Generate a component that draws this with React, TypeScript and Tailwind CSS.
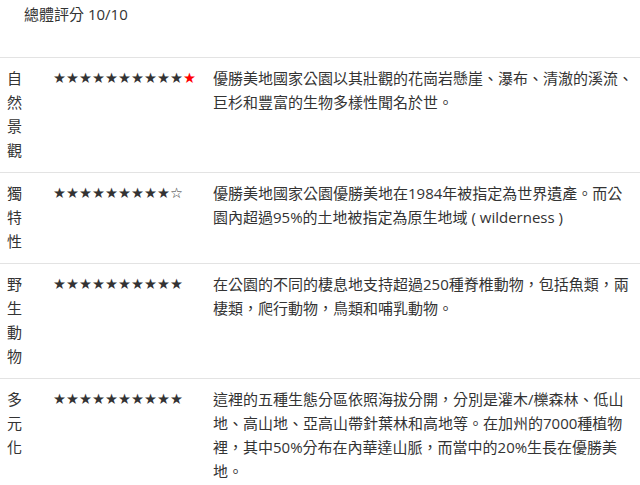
import React from "react";

const rows = [
  {
    label: "自然景觀",
    stars: <><span>★★★★★★★★★★</span><span className="text-[#ff0000]">★</span></>,
    text: "優勝美地國家公園以其壯觀的花崗岩懸崖、瀑布、清澈的溪流、巨杉和豐富的生物多樣性聞名於世。",
  },
  {
    label: "獨特性",
    stars: <span>★★★★★★★★★☆</span>,
    text: "優勝美地國家公園優勝美地在1984年被指定為世界遺產。而公園內超過95%的土地被指定為原生地域 ( wilderness )",
  },
  {
    label: "野生動物",
    stars: <span>★★★★★★★★★★</span>,
    text: "在公園的不同的棲息地支持超過250種脊椎動物，包括魚類，兩棲類，爬行動物，鳥類和哺乳動物。",
  },
  {
    label: "多元化",
    stars: <span>★★★★★★★★★★</span>,
    text: "這裡的五種生態分區依照海拔分開，分別是灌木/櫟森林、低山地、高山地、亞高山帶針葉林和高地等。在加州的7000種植物裡，其中50%分布在內華達山脈，而當中的20%生長在優勝美地。",
  },
];

export default function App() {
  return (
    <div
      className="w-[640px] h-[485px] overflow-hidden bg-white text-[#333333] text-[15px] leading-[24px]"
      style={{ fontFamily: '"Open Sans", "Noto Sans CJK TC", sans-serif' }}
    >
      <div className="h-[57px] pl-[24px] pt-[2px]">總體評分 10/10</div>
      {rows.map((r, i) => (
        <div key={i} className="grid grid-cols-[45px_160px_1fr] border-t border-[#e3e3e3]">
          <div className="pl-[7px] pr-[16px] pt-[8px] pb-[10px] break-all">{r.label}</div>
          <div
            className="pl-[8px] pt-[8px] pb-[10px] whitespace-nowrap text-[14.5px] text-[#333333]"
            style={{ fontFamily: '"DejaVu Sans", sans-serif' }}
          >
            {r.stars}
          </div>
          <div className="pl-[8px] pr-[6px] pt-[8px] pb-[10px]">{r.text}</div>
        </div>
      ))}
    </div>
  );
}
